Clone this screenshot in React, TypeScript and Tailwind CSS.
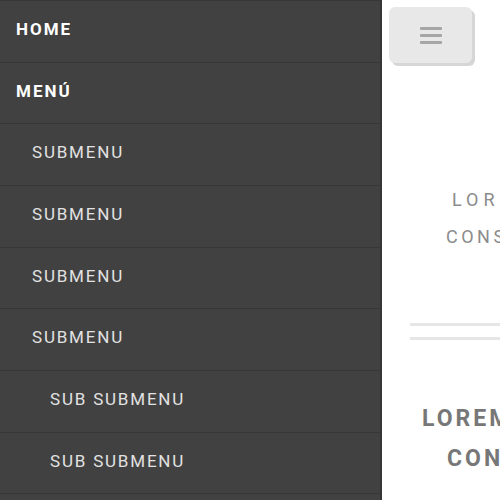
type Item = { label: string; level: number; bold?: boolean }

const items: Item[] = [
    { label: 'HOME', level: 0, bold: true },
    { label: 'MENÚ', level: 0, bold: true },
    { label: 'SUBMENU', level: 1 },
    { label: 'SUBMENU', level: 1 },
    { label: 'SUBMENU', level: 1 },
    { label: 'SUBMENU', level: 1 },
    { label: 'SUB SUBMENU', level: 2 },
    { label: 'SUB SUBMENU', level: 2 },
    { label: 'SUB SUBMENU', level: 2 },
]

const indent = ['pl-[16px]', 'pl-[32px]', 'pl-[50px]']

export default function App() {
    return (
        <div className="flex h-[500px] w-[500px] overflow-hidden bg-white font-['Roboto',sans-serif]">
            {/* off-canvas navigation */}
            <nav className="h-full w-[382px] shrink-0 border-r-2 border-[#363636] bg-[#414141]">
                <ul>
                    {items.map((item, i) => (
                        <li
                            key={i}
                            className={`flex h-[61.67px] items-center border-t border-[#373737] pb-[3px] text-[17px] ${indent[item.level]} ${item.bold
                                ? 'font-bold tracking-[2px] text-white'
                                : 'tracking-[1.8px] text-[#e2e2e2]'
                                }`}
                        >
                            {item.label}
                        </li>
                    ))}
                </ul>
            </nav>

            {/* page content, pushed aside by the menu */}
            <main className="w-[500px] shrink-0">
                <button className="ml-[7px] mt-[7px] flex h-[56px] w-[83px] flex-col items-center justify-center gap-[4px] rounded-[6px] bg-[#e8e8e8] shadow-[3px_3px_0_#d6d6d6]">
                    <span className="h-[3px] w-[22px] rounded-[1px] bg-[#a6a6a6]" />
                    <span className="h-[3px] w-[22px] rounded-[1px] bg-[#a6a6a6]" />
                    <span className="h-[3px] w-[22px] rounded-[1px] bg-[#a6a6a6]" />
                </button>
                <div className="mt-[118px] whitespace-nowrap text-[18px] leading-[37px] text-[#8c8c8c]">
                    <p className="pl-[70px] tracking-[5px]">LOREM IPSUM</p>
                    <p className="pl-[64px] tracking-[3.5px]">CONSECTETUR</p>
                </div>
                <div className="mx-[28px] mt-[68px] h-[17px] border-y-[3px] border-[#e6e6e6]" />
                <div className="mt-[58.5px] whitespace-nowrap text-[23px] font-bold leading-[40px] tracking-[3px] text-[#777777]">
                    <p className="pl-[40px]">LOREM IPSUM</p>
                    <p className="pl-[65px]">CONSECTETUR</p>
                </div>
            </main>
        </div>
    )
}
